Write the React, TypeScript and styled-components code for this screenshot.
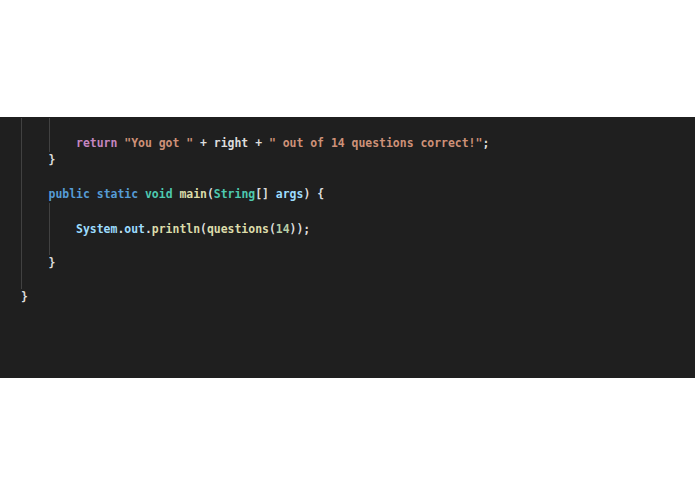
import React from "react";
import styled, { createGlobalStyle } from "styled-components";

const Global = createGlobalStyle`
  html, body { margin: 0; padding: 0; background: #ffffff; }
  body { width: 695px; height: 494px; overflow: hidden; }
`;

const Page = styled.div`
  padding-top: 117px;
`;

const Editor = styled.div`
  height: 261px;
  background: #1f1f1f;
  padding-left: 21px;
  padding-top: 1px;
  box-sizing: border-box;
  font-family: "DejaVu Sans Mono", "Liberation Mono", monospace;
  font-size: 11.45px;
  font-weight: bold;
  color: #d4d4d4;
`;

const Line = styled.div`
  display: flex;
  height: 17.1px;
  line-height: 17.1px;
  white-space: pre;
`;

const Indent = styled.span<{ $guide?: boolean }>`
  display: inline-block;
  width: 4ch;
  height: 100%;
  box-sizing: border-box;
  border-left: 1px solid ${(p) => (p.$guide ? "#414141" : "transparent")};
`;

const Tok = styled.span<{ $c: string }>`
  color: ${(p) => p.$c};
`;

const C = {
  kw: "#c586c0",
  str: "#ce9178",
  var: "#9cdcfe",
  blue: "#569cd6",
  type: "#4ec9b0",
  fn: "#dcdcaa",
  num: "#b5cea8",
  plain: "#dcdcdc",
};

type Seg = [string, string];

const lines: { guides: boolean[]; segs: Seg[] }[] = [
  { guides: [true, true], segs: [] },
  {
    guides: [true, true],
    segs: [
      [C.kw, "return"],
      [C.plain, " "],
      [C.str, "\"You got \""],
      [C.plain, " + right + "],
      [C.str, "\" out of 14 questions correct!\""],
      [C.plain, ";"],
    ],
  },
  { guides: [true], segs: [[C.plain, "}"]] },
  { guides: [true], segs: [] },
  {
    guides: [true],
    segs: [
      [C.blue, "public"],
      [C.plain, " "],
      [C.blue, "static"],
      [C.plain, " "],
      [C.type, "void"],
      [C.plain, " "],
      [C.fn, "main"],
      [C.plain, "("],
      [C.type, "String"],
      [C.plain, "[] "],
      [C.var, "args"],
      [C.plain, ") {"],
    ],
  },
  { guides: [true, true], segs: [] },
  {
    guides: [true, true],
    segs: [
      [C.var, "System"],
      [C.plain, "."],
      [C.var, "out"],
      [C.plain, "."],
      [C.fn, "println"],
      [C.plain, "("],
      [C.fn, "questions"],
      [C.plain, "("],
      [C.num, "14"],
      [C.plain, "));"],
    ],
  },
  { guides: [true, true], segs: [] },
  { guides: [true], segs: [[C.plain, "}"]] },
  { guides: [true], segs: [] },
  { guides: [], segs: [[C.plain, "}"]] },
];

export default function App() {
  return (
    <Page>
      <Global />
      <Editor>
        {lines.map((l, i) => (
          <Line key={i}>
            {l.guides.map((g, j) => (
              <Indent key={j} $guide={g} />
            ))}
            {l.segs.map(([c, t], k) => (
              <Tok key={k} $c={c}>
                {t}
              </Tok>
            ))}
          </Line>
        ))}
      </Editor>
    </Page>
  );
}
